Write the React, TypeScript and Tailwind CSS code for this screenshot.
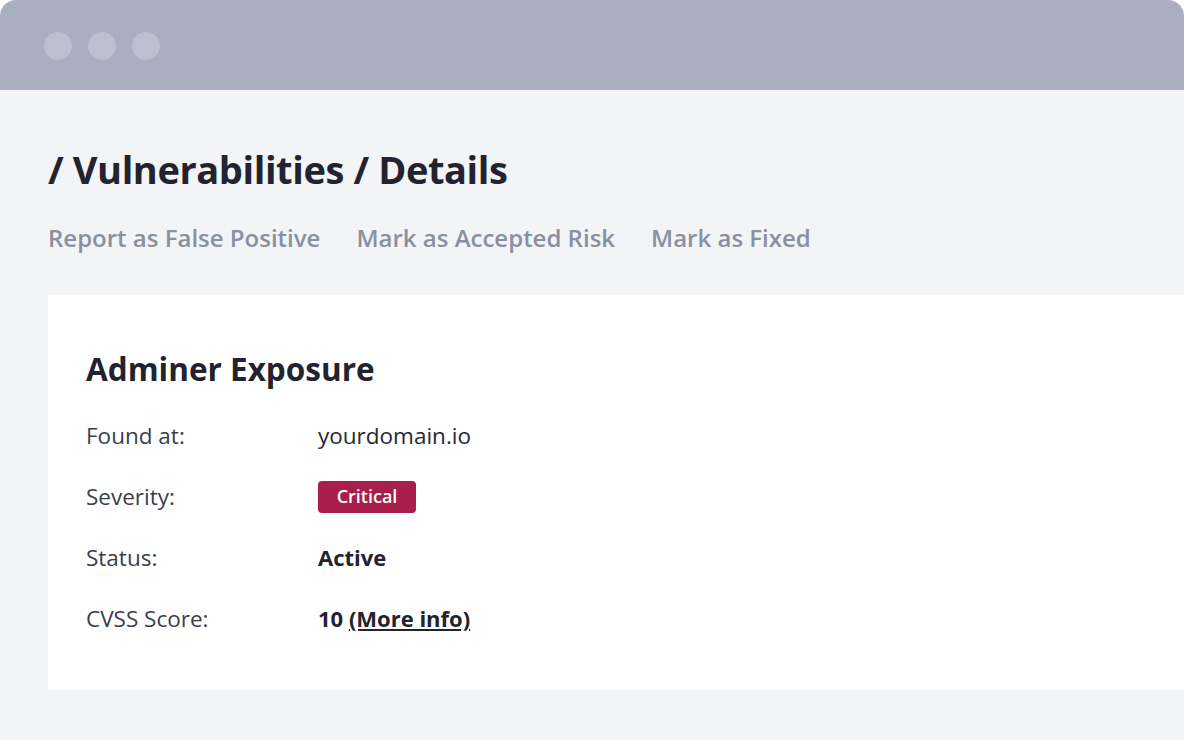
export default function App() {
  const rows = [
    { label: "Found at:", value: <span className="text-[22.5px] text-[#262835]">yourdomain.io</span> },
    {
      label: "Severity:",
      value: (
        <span className="inline-flex h-[32px] w-[98px] items-center justify-center rounded-[4px] bg-[#a81f4e] text-[18px] font-semibold text-white">
          Critical
        </span>
      ),
    },
    { label: "Status:", value: <span className="text-[22px] font-bold text-[#23232f]">Active</span> },
    {
      label: "CVSS Score:",
      value: (
        <span className="text-[22px] font-bold text-[#23232f]">
          10 <span className="underline underline-offset-2">(More info)</span>
        </span>
      ),
    },
  ];

  return (
    <div
      className="flex h-[740px] w-[1184px] flex-col overflow-hidden bg-white"
      style={{ fontFamily: "'Open Sans', 'Noto Sans', sans-serif" }}
    >
      <div className="flex h-[90px] shrink-0 items-center gap-[16px] rounded-t-[16px] bg-[#a9aec1] pl-[44px] pt-[2px]">
        <span className="h-[28px] w-[28px] rounded-full bg-[#bbc0cf]" />
        <span className="h-[28px] w-[28px] rounded-full bg-[#bbc0cf]" />
        <span className="h-[28px] w-[28px] rounded-full bg-[#bbc0cf]" />
      </div>

      <div className="flex flex-1 flex-col bg-[#f3f4f6] pl-[48px]">
        <h1 className="mt-[53px] text-[38px] font-bold leading-[52px] tracking-[-0.4px] text-[#23232f]">
          / Vulnerabilities / Details
        </h1>
        <div className="mt-[27px] flex gap-[36px] text-[24px] font-semibold leading-[32px] text-[#8b90a0]">
          <span>Report as False Positive</span>
          <span>Mark as Accepted Risk</span>
          <span>Mark as Fixed</span>
        </div>

        <div className="mt-[41px] flex h-[395px] flex-col bg-white pl-[38px]">
          <h2 className="mt-[53px] text-[31.5px] font-bold leading-[42px] text-[#23232f]">Adminer Exposure</h2>
          <div className="mt-[15px] flex flex-col">
            {rows.map((r) => (
              <div key={r.label} className="flex h-[61px] items-center">
                <span className="w-[232px] text-[22.5px] text-[#3b3d4d]">{r.label}</span>
                {r.value}
              </div>
            ))}
          </div>
        </div>
      </div>
    </div>
  );
}
